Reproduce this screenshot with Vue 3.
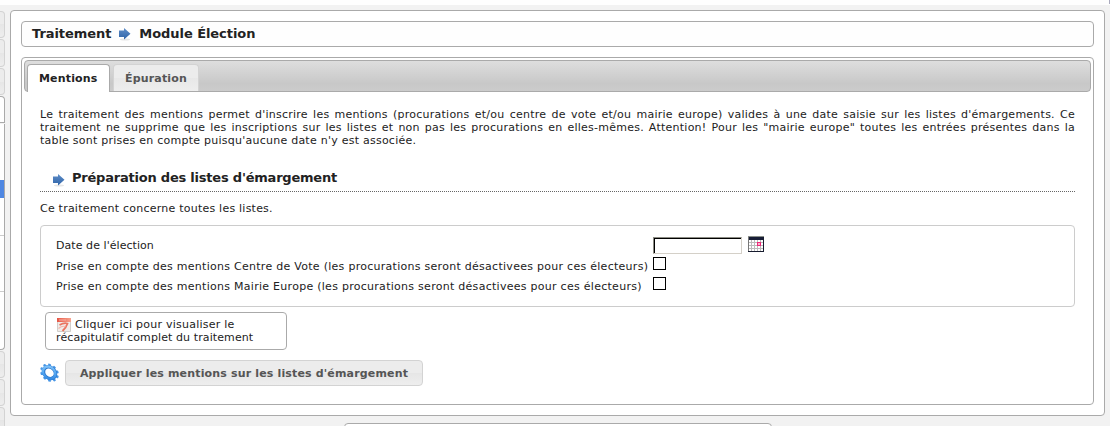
<script setup>
const intro = [
  "Le traitement des mentions permet d'inscrire les mentions (procurations et/ou centre de vote et/ou mairie europe) valides à une date saisie sur les listes d'émargements. Ce",
  "traitement ne supprime que les inscriptions sur les listes et non pas les procurations en elles-mêmes. Attention! Pour les \"mairie europe\" toutes les entrées présentes dans la",
]
const teeth = [0, 36, 72, 108, 144, 180, 216, 252, 288, 324]
</script>

<template>
  <div class="page">
    <div class="topbar"><i></i></div>
    <div class="body">
      <aside class="rail">
        <i class="item"></i><i class="item tall"></i><i class="item"></i>
        <i class="item open"></i>
        <div class="menu"><i class="row first"></i><i class="row active"></i><i class="row second"></i><i class="row third"></i></div>
        <i class="item"></i><i class="item"></i><i class="item"></i>
      </aside>
      <div class="main">
        <main class="content">
          <h2 class="title">
            <span class="t1">Traitement</span>
            <svg class="arrow" width="14" height="14" viewBox="0 0 14 14">
              <defs><linearGradient id="blue" x1="0" y1="0" x2="0" y2="1"><stop offset="0" stop-color="#5e8dc8" /><stop offset="1" stop-color="#2f64a8" /></linearGradient></defs>
              <ellipse cx="7" cy="12.500" rx="5" ry="1" fill="#e6e6e6" />
              <path d="M1 3.500h5V1l6.500 5.700L6 12.500V10H1z" fill="url(#blue)" />
            </svg>
            <span class="t2">Module Élection</span>
          </h2>
          <section class="tabs">
            <nav class="tabbar">
              <a class="tab current"><span>Mentions</span></a>
              <a class="tab"><span>Épuration</span></a>
            </nav>
            <div class="panel">
              <div class="intro">
                <div v-for="line in intro" :key="line" class="just">{{ line }}</div>
                <div>table sont prises en compte puisqu'aucune date n'y est associée.</div>
              </div>
              <h3 class="subtitle">
                <svg class="arrow" width="14" height="14" viewBox="0 0 14 14">
                  <ellipse cx="7" cy="12.500" rx="5" ry="1" fill="#e6e6e6" />
                  <path d="M1 3.500h5V1l6.500 5.700L6 12.500V10H1z" fill="url(#blue)" />
                </svg>
                <span>Préparation des listes d'émargement</span>
              </h3>
              <p class="note"><span>Ce traitement concerne toutes les listes.</span></p>
              <div class="fields">
                <div class="field date">
                  <label>Date de l'élection</label>
                  <span class="input"><i></i></span>
                  <svg class="cal" width="16" height="16" viewBox="0 0 16 16" shape-rendering="crispEdges">
                    <path d="M0 0h16v16H0z" fill="#fff" />
                    <path d="M3.500 4v11M6.500 4v11M9.500 4v11M12.500 4v11M1 6.500h14M1 9.500h14M1 12.500h14" stroke="#bbb" />
                    <path d="M.5 0v16" stroke="#777" />
                    <path d="M1 1h14v3H1z" fill="#171d36" />
                    <path d="M0 .5h16" stroke="#8a8f8a" />
                    <path d="M15.500 1v15M0 15.500h16" stroke="#161b2e" />
                    <path d="M9.500 6.500h3v3h-3z" fill="#f9b5d0" stroke="#ee2878" />
                  </svg>
                </div>
                <div class="field"><label>Prise en compte des mentions Centre de Vote (les procurations seront désactivees pour ces électeurs)</label><span class="check"></span></div>
                <div class="field"><label>Prise en compte des mentions Mairie Europe (les procurations seront désactivees pour ces électeurs)</label><span class="check"></span></div>
              </div>
              <a class="recap">
                <span class="line first-line">
                  <svg width="14" height="14" viewBox="0 0 14 14">
                    <defs><linearGradient id="red" x1="0" y1="0" x2="1" y2="0"><stop offset="0" stop-color="#e65545" /><stop offset="1" stop-color="#f8a48e" /></linearGradient></defs>
                    <path d="M.5.5h13v13H.5z" fill="#f0ece9" stroke="#d1cecb" />
                    <path d="M0 0h14v4H0z" fill="url(#red)" />
                    <path d="M2 2h7" stroke="#f6b0a3" />
                    <path d="M2.500 7Q7 4.500 10.500 5.500 9.500 9 5.500 13" fill="none" stroke="#ea7560" stroke-width="1.800" />
                    <path d="M1.500 10.500Q5 7.500 8.500 8.500" fill="none" stroke="#f4b5a8" stroke-width="1.200" />
                  </svg><span>Cliquer ici pour visualiser le</span>
                </span>
                <span class="line">récapitulatif complet du traitement</span>
              </a>
              <div class="actions">
                <svg class="gear" width="20" height="20" viewBox="0 0 20 20">
                  <defs><linearGradient id="gearfill" x1="0" y1="0" x2="1" y2="1"><stop offset="0" stop-color="#8bc9fa" /><stop offset=".5" stop-color="#57a9f2" /><stop offset="1" stop-color="#2b80dc" /></linearGradient></defs>
                  <g transform="translate(9.500 9.700) rotate(42) scale(1.060 .86) translate(-10 -10)">
                    <rect v-for="a in teeth" :key="a" x="8.600" y=".4" width="2.800" height="4" rx=".6" fill="#4796e6" :transform="`rotate(${a} 10 10)`" />
                    <circle cx="10" cy="10" r="6.200" fill="none" stroke="#2a77cf" stroke-width="3.600" />
                    <circle cx="9.700" cy="10.200" r="6.400" fill="none" stroke="url(#gearfill)" stroke-width="2.500" />
                  </g>
                </svg>
                <button class="apply"><span>Appliquer les mentions sur les listes d'émargement</span></button>
              </div>
            </div>
          </section>
        </main>
        <footer class="foot"></footer>
      </div>
    </div>
  </div>
</template>

<style>
body { overflow: hidden; background: #fff; }
</style>

<style scoped>
* { box-sizing: border-box; }
.page { width: 1115px; height: 426px; overflow: hidden; font: 11px/13px "DejaVu Sans", sans-serif; color: #222; }
.topbar { height: 5px; width: 1110px; display: flex; justify-content: flex-end; background: #fefefe; }
.topbar i { width: 1px; height: 4px; background: #aaaabe; }
.body { display: flex; width: 1110px; height: 421px; background: #f2f2f2; }
.rail { width: 5px; flex: none; padding-top: 6px; display: flex; flex-direction: column; gap: 1px; }
.item { flex: none; display: block; height: 27px; border: 1px solid #d3d3d3; border-left: 0; border-radius: 0 4px 4px 0; background: linear-gradient(#ececec 50%, #e6e6e6 50%, #eee); }
.item.tall { height: 28px; }
.item.open { border-color: #aaa; background: #fff; border-bottom-right-radius: 0; }
.menu { flex: none; height: 226px; border: solid #aaa; border-width: 0 1px 1px 0; border-radius: 0 0 4px 0; background: #fff; }
.row { display: block; height: 56px; }
.row.active { height: 18px; background: #4f87e2; }
.row.second { height: 38px; border-bottom: 1px solid #ccc; }
.row.third { border-bottom: 1px solid #ccc; }
.main { flex: 1; padding: 5px 5px 0; }
.content { height: 406px; padding: 10px; border: 1px solid #aaa; border-radius: 4px; background: #fff; }
.title { margin: 0; height: 26px; padding-left: 10px; display: flex; align-items: center; border: 1px solid #aaa; border-radius: 4px; background: #fefefe; font-size: 13px; line-height: 16px; }
.t1, .t2 { letter-spacing: -.06px; }
.title .arrow { margin: 0 7px 0 7px; }
.arrow, .cal, .gear { display: block; flex: none; }
.tabs { margin-top: 10px; height: 348px; padding: 2px; border: 1px solid #aaa; border-radius: 4px; }
.tabbar { height: 32px; padding: 3px 2px 0; display: flex; gap: 3px; border: 1px solid #aaa; border-radius: 4px; background: linear-gradient(#dedede, #c8c8c8 75%, #cccccc); }
.tab { height: 27px; width: 86px; padding: 7px 0 0 11px; border: 1px solid #d3d3d3; border-bottom: 0; border-radius: 4px 4px 0 0; background: linear-gradient(#ececec 50%, #e7e7e7 50%, #eee); color: #555; font-weight: bold; letter-spacing: .17px; white-space: nowrap; }
.tab.current { width: 83px; height: 28px; border-color: #aaa; background: #fff; color: #222; }
.panel { padding: 16px 16px 0; }
.intro { height: 39px; letter-spacing: .245px; white-space: nowrap; }
.just { text-align-last: justify; white-space: normal; }
.subtitle { margin: 20px 0 0; height: 25px; padding-left: 12px; display: flex; gap: 6px; border-bottom: 1px dotted #666; font-size: 13px; line-height: 21px; letter-spacing: -.215px; }
.subtitle .arrow { margin-top: 6px; }
.note { margin: 10px 0 0; height: 13px; letter-spacing: .225px; }
.fields { margin-top: 10px; height: 82px; padding: 8px 15px; border: 1px solid #ccc; border-radius: 4px; }
.field { height: 20px; display: flex; align-items: center; white-space: nowrap; }
.field label { width: 597px; flex: none; letter-spacing: .276px; }
.field.date { height: 22px; }
.field.date label { letter-spacing: .06px; }
.input { display: flex; width: 89px; height: 17px; margin: 0 6px 0 0; border: 1px solid; border-color: #8c8c84 #d4d0c8 #d4d0c8 #8c8c84; background: #fff; }
.input i { flex: 1; border: solid #000; border-width: 1px 0 0 1px; }
.cal { margin-bottom: 2px; }
.check { width: 13px; height: 13px; margin-bottom: 5px; border: 1px solid #000; background: #fff; }
.recap { display: block; width: 242px; height: 38px; margin: 5px 0 0 5px; padding: 5px 10px; border: 1px solid #aaa; border-radius: 4px; }
.line { display: flex; height: 13px; letter-spacing: .1px; white-space: nowrap; }
.first-line { letter-spacing: .24px; }
.line svg { display: block; flex: none; margin: 0 4px 0 1px; }
.actions { display: flex; align-items: center; margin-top: 10px; height: 26px; gap: 5px; }
.apply { width: 358px; height: 26px; padding: 0; border: 1px solid #d3d3d3; border-radius: 4px; background: linear-gradient(#ececec 50%, #e6e6e6 50%, #eee); color: #555; font: bold 11px/13px "DejaVu Sans", sans-serif; letter-spacing: .16px; }
.foot { width: 428px; height: 20px; margin: 7px 0 0 334px; border: 1px solid #aaa; border-radius: 4px; background: #fff; }
</style>
